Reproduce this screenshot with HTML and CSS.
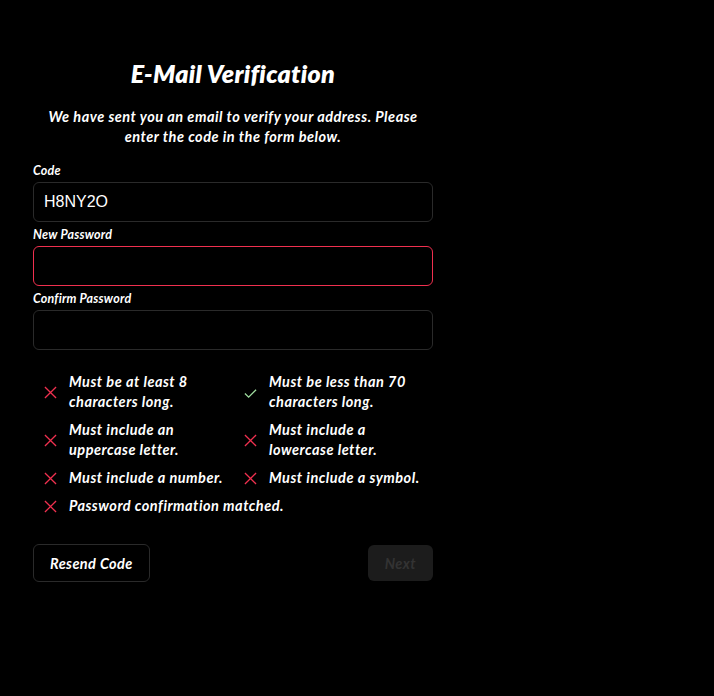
FILE: index.html
```html
<!DOCTYPE html>
<html lang="en">
<head>
    <meta charset="UTF-8">
    <meta name="viewport" content="width=device-width, initial-scale=1.0">
    <title>E-Mail Verification</title>
    <link rel="stylesheet" href="styles.css">
</head>
<body>
    <div class="container">
        <h1>E-Mail Verification</h1>
        <p class="intro">We have sent you an email to verify your address. Please enter the code in the form below.</p>

        <form class="form">
            <label for="code">Code</label>
            <input type="text" id="code" value="H8NY2O">

            <label for="password">New Password</label>
            <input type="password" id="password" class="invalid">

            <label for="confirm">Confirm Password</label>
            <input type="password" id="confirm">
        </form>

        <ul class="rules">
            <li class="fail">
                <svg viewBox="0 0 14 14"><path d="M1 1L13 13M13 1L1 13"/></svg>
                <span>Must be at least 8 characters long.</span>
            </li>
            <li class="pass">
                <svg viewBox="0 0 14 14"><path d="M1 8L5 12L13 4"/></svg>
                <span>Must be less than 70 characters long.</span>
            </li>
            <li class="fail">
                <svg viewBox="0 0 14 14"><path d="M1 1L13 13M13 1L1 13"/></svg>
                <span>Must include an uppercase letter.</span>
            </li>
            <li class="fail">
                <svg viewBox="0 0 14 14"><path d="M1 1L13 13M13 1L1 13"/></svg>
                <span>Must include a lowercase letter.</span>
            </li>
            <li class="fail">
                <svg viewBox="0 0 14 14"><path d="M1 1L13 13M13 1L1 13"/></svg>
                <span>Must include a number.</span>
            </li>
            <li class="fail">
                <svg viewBox="0 0 14 14"><path d="M1 1L13 13M13 1L1 13"/></svg>
                <span>Must include a symbol.</span>
            </li>
            <li class="fail wide">
                <svg viewBox="0 0 14 14"><path d="M1 1L13 13M13 1L1 13"/></svg>
                <span>Password confirmation matched.</span>
            </li>
        </ul>

        <div class="actions">
            <button class="resend">Resend Code</button>
            <button class="next" disabled>Next</button>
        </div>
    </div>
</body>
</html>
```

FILE: styles.css
```css
body {
    margin: 0;
    background: #000;
    color: #fff;
    font-family: Lato, 'Noto Sans', sans-serif;
}

.container {
    width: 400px;
    margin-left: 33px;
    padding-top: 56px;
}

h1 {
    margin: 0;
    text-align: center;
    font-size: 25px;
    font-weight: 800;
    font-style: italic;
    line-height: 34px;
    letter-spacing: 0.3px;
}

.intro {
    margin: 17px 14px 16px;
    text-align: center;
    font-size: 14.5px;
    font-weight: 700;
    font-style: italic;
    line-height: 20px;
    letter-spacing: 0.5px;
}

.form label {
    display: block;
    font-size: 12.5px;
    font-weight: 700;
    font-style: italic;
    line-height: 16px;
    margin-bottom: 3px;
    letter-spacing: 0.2px;
}

.form input {
    display: block;
    box-sizing: border-box;
    width: 100%;
    height: 40px;
    margin: 0 0 5px;
    padding: 0 10px;
    background: #000;
    color: #fff;
    border: 1px solid #2a2a2a;
    border-radius: 6px;
    font-family: 'Liberation Sans', Arial, sans-serif;
    font-size: 16px;
    outline: none;
}

.form input.invalid {
    border-color: #f0304f;
}

.rules {
    list-style: none;
    margin: 22px 0 0;
    padding: 0;
    display: grid;
    grid-template-columns: 200px 200px;
    row-gap: 8px;
}

.rules li {
    display: flex;
    align-items: center;
    gap: 12px;
    padding-left: 11px;
    font-size: 14.5px;
    font-weight: 700;
    font-style: italic;
    line-height: 20px;
    letter-spacing: 0.5px;
}

.rules li.wide {
    grid-column: span 2;
}

.rules span {
    width: 160px;
}

.rules li.wide span {
    width: auto;
}

.rules svg {
    flex: none;
    width: 13px;
    height: 13px;
    fill: none;
    stroke-width: 1.4;
}

.fail svg {
    stroke: #f0304f;
}

.pass svg {
    stroke: #9fdc9f;
}

.actions {
    display: flex;
    justify-content: space-between;
    align-items: center;
    margin-top: 28px;
}

.actions button {
    font-family: Lato, 'Noto Sans', sans-serif;
    font-size: 14.5px;
    font-weight: 700;
    font-style: italic;
    letter-spacing: 0.4px;
    border-radius: 6px;
}

.resend {
    height: 38px;
    padding: 0 16px;
    background: #000;
    color: #fff;
    border: 1px solid #2a2a2a;
}

.next {
    height: 36px;
    padding: 0 17px;
    background: #1c1c1c;
    color: #333;
    border: none;
}
```
